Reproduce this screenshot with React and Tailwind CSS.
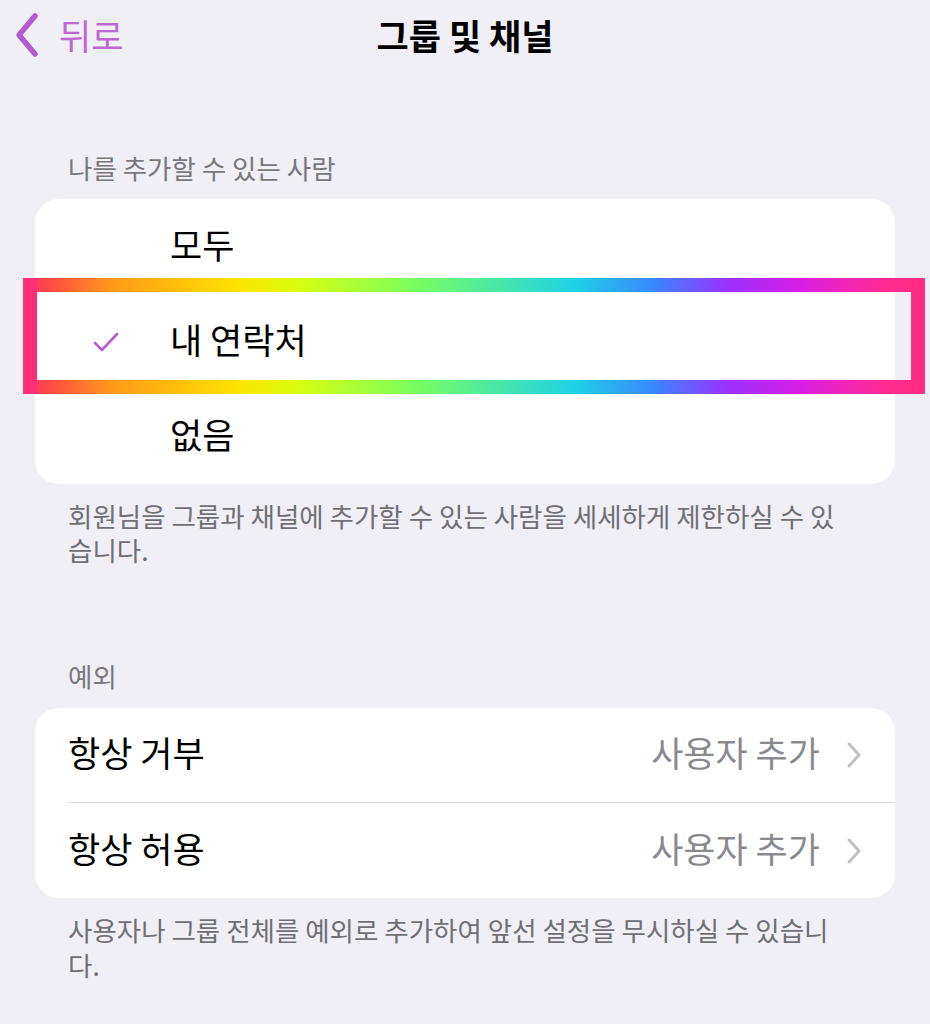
import React from 'react';

const FONT = { fontFamily: '"Noto Sans CJK KR", "Noto Sans", sans-serif' };

const Check = () => (
  <svg width="28" height="24" viewBox="0 0 28 24" fill="none">
    <path d="M3 13 L10 20 L25 4" stroke="#b45fd0" strokeWidth="2.6" strokeLinecap="round" strokeLinejoin="round" />
  </svg>
);

const Chevron = () => (
  <svg width="16" height="28" viewBox="0 0 16 28" fill="none">
    <path d="M3 3 L13 14 L3 25" stroke="#c2c2c6" strokeWidth="3" strokeLinecap="round" strokeLinejoin="round" />
  </svg>
);

// coloured frame drawn over the selected row
const RainbowFrame = () => (
  <div className="pointer-events-none absolute left-[-12px] right-[-30px] top-[79px] h-[116px]">
    <div className="absolute inset-x-0 top-0 h-[14px] bg-[linear-gradient(90deg,#ff2e72_0%,#ff4b42_3%,#ff9a18_10%,#ffe400_24%,#d4ff12_31%,#7cff5c_43%,#1ed2e6_61%,#3a86ff_70%,#9a32ff_78%,#d81ee6_86%,#ff2a96_95%,#ff2d80_100%)]" />
    <div className="absolute inset-x-0 bottom-0 h-[14px] bg-[linear-gradient(90deg,#ff2e72_0%,#ff4b42_3%,#ff9a18_10%,#ffe400_24%,#d4ff12_31%,#7cff5c_43%,#1ed2e6_61%,#3a86ff_70%,#9a32ff_78%,#d81ee6_86%,#ff2a96_95%,#ff2d80_100%)]" />
    <div className="absolute left-0 top-0 bottom-0 w-[14px] bg-[#ff2d78]" />
    <div className="absolute right-0 top-0 bottom-0 w-[14px] bg-[#ff2d82]" />
  </div>
);

const OptionRow = ({ label, checked }) => (
  <div className="h-[95px] flex items-center">
    <div className="w-[135px] flex justify-center pl-[6px]">{checked && <Check />}</div>
    <span className="text-[35px] text-black pb-[5px]">{label}</span>
  </div>
);

const ExceptionRow = ({ label, last }) => (
  <div className="h-[95px] flex items-center pl-[33px]">
    <div className={`flex-1 h-full flex items-center pr-[33px] ${last ? '' : 'border-b border-[#d9d9dd]'}`}>
      <span className="text-[35px] text-black flex-1 pb-[5px]">{label}</span>
      <span className="text-[35px] text-[#8a8a8e] mr-[26px] pb-[5px]">사용자 추가</span>
      <Chevron />
    </div>
  </div>
);

export default function App() {
  return (
    <div className="min-h-[1024px] w-[930px] bg-[#f0eff5] overflow-hidden" style={FONT}>
      {/* navigation bar */}
      <div className="relative h-[70px] flex items-center">
        <div className="flex items-center pl-[15px] gap-[20px]">
          <svg width="24" height="46" viewBox="0 0 24 46" fill="none">
            <path d="M20 4 L4 23 L20 42" stroke="#b659d0" strokeWidth="5.5" strokeLinecap="round" strokeLinejoin="round" />
          </svg>
          <span className="text-[35px] text-[#bc69d2]">뒤로</span>
        </div>
        <span className="absolute inset-x-0 text-center text-[35px] font-bold text-black">그룹 및 채널</span>
      </div>

      <div className="px-[35px]">
        <div className="mt-[81px] pl-[33px] text-[26.5px] leading-[34px] text-[#77777c]">나를 추가할 수 있는 사람</div>

        <div className="relative mt-[14px]">
          <div className="bg-white rounded-[24px]">
            <OptionRow label="모두" />
            <OptionRow label="내 연락처" checked />
            <OptionRow label="없음" />
          </div>
          <RainbowFrame />
        </div>

        <p className="mt-[15px] ml-[33px] w-[775px] text-[26.5px] leading-[34px] text-[#6f6f74]">
          회원님을 그룹과 채널에 추가할 수 있는 사람을 세세하게 제한하실 수 있습니다.
        </p>

        <div className="mt-[92px] pl-[33px] text-[26.5px] leading-[34px] text-[#77777c]">예외</div>

        <div className="mt-[15px] bg-white rounded-[24px]">
          <ExceptionRow label="항상 거부" />
          <ExceptionRow label="항상 허용" last />
        </div>

        <p className="mt-[14px] ml-[33px] w-[775px] text-[26.5px] leading-[35px] text-[#6f6f74]">
          사용자나 그룹 전체를 예외로 추가하여 앞선 설정을 무시하실 수 있습니다.
        </p>
      </div>
    </div>
  );
}
